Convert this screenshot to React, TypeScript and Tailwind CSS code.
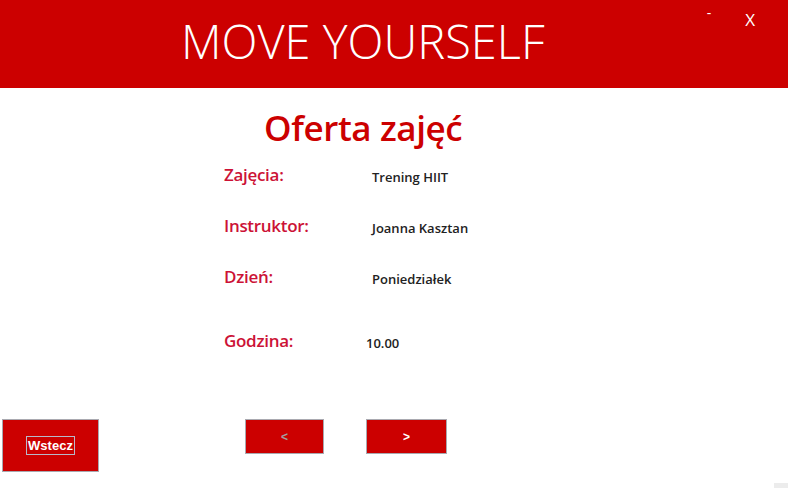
export default function App() {
  const rows = [
    { label: "Zajęcia:", value: "Trening HIIT", h: "h-[51px]", vx: "ml-[148px]" },
    { label: "Instruktor:", value: "Joanna Kasztan", h: "h-[51px]", vx: "ml-[148px]" },
    { label: "Dzień:", value: "Poniedziałek", h: "h-[64px]", vx: "ml-[148px]" },
    { label: "Godzina:", value: "10.00", h: "h-[40px]", vx: "ml-[142px]" },
  ]

  return (
    <div className="w-[788px] h-[488px] bg-white relative overflow-hidden font-['Open_Sans',sans-serif]">
      <header className="h-[88px] bg-[#cc0000] relative flex items-center">
        <h1 className="ml-[181px] text-white text-[47px] font-light leading-none mt-[-6px]">
          MOVE YOURSELF
        </h1>
        <div className="absolute top-[4px] right-[33px] flex items-start gap-[34px] text-white">
          <span className="text-[14px] leading-none mt-[2px]">-</span>
          <span className="text-[17px] leading-none mt-[7px]">X</span>
        </div>
      </header>

      <main>
        <h2 className="mt-[18px] ml-[264px] text-[#cc0000] text-[35px] font-semibold leading-[44px] tracking-[-0.4px]">
          Oferta zajęć
        </h2>
        <div className="mt-[13px] ml-[224px] flex flex-col">
          {rows.map((r) => (
            <div key={r.label} className={`flex items-start ${r.h}`}>
              <span className="w-0 whitespace-nowrap text-[#cc1236] text-[17px] font-semibold leading-[24px] tracking-[-0.3px]">
                {r.label}
              </span>
              <span className={`${r.vx} whitespace-nowrap text-[#222] text-[13px] font-semibold leading-[24px] mt-[2px]`}>
                {r.value}
              </span>
            </div>
          ))}
        </div>

        <div className="mt-[50px] ml-[2px] flex items-start font-['Liberation_Sans',sans-serif]">
          <button className="w-[97px] h-[53px] bg-[#cc0000] border border-[#a9a9b0] flex items-center justify-center">
            <span className="text-white text-[13px] font-bold border border-[#b8b8c8] px-[1px] leading-[17px]">Wstecz</span>
          </button>
          <button className="ml-[146px] w-[79px] h-[35px] bg-[#cc0000] border border-[#a9a9b0] text-[#a0a0a0] text-[12px] font-bold">
            &lt;
          </button>
          <button className="ml-[42px] w-[81px] h-[35px] bg-[#cc0000] border border-[#a9a9b0] text-white text-[12px] font-bold">
            &gt;
          </button>
        </div>
      </main>

      <div className="absolute right-0 bottom-0 w-[14px] h-[5px] bg-[#ececec]" />
    </div>
  )
}
